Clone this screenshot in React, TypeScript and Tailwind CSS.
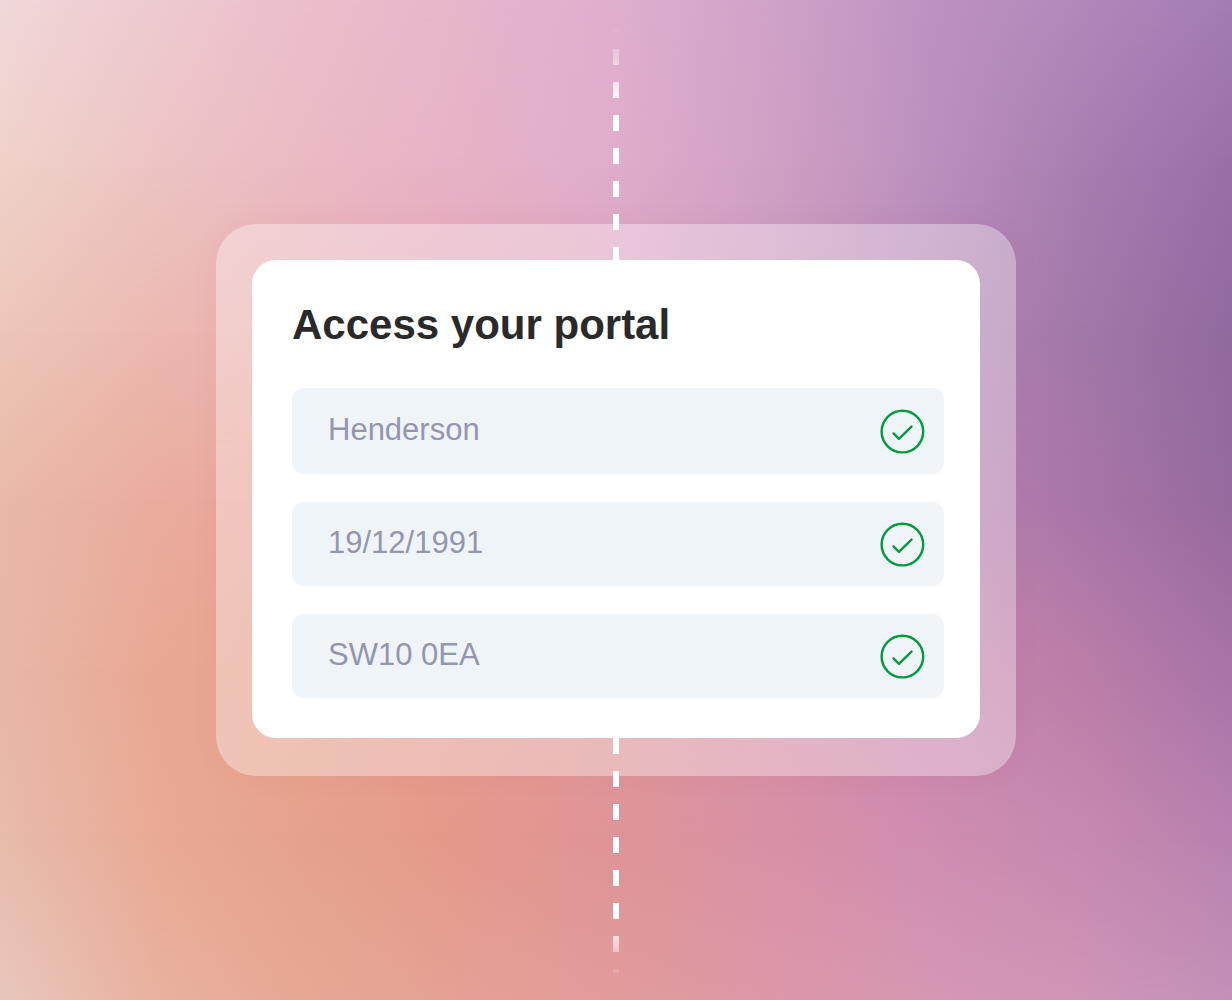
const gradientRows = [
  "bg-[linear-gradient(to_right,#f1d8d9,#eecbd0,#ecbecb,#e8b5cc,#e0afce,#d0a3ca,#bf93c1,#b189bb,#a37db4)]",
  "bg-[linear-gradient(to_right,#efd2ca,#edc4c4,#ebb9c2,#e7b2c7,#e0acca,#d0a0c5,#bc91bd,#a87eb1,#986fa8)] [mask-image:linear-gradient(to_bottom,transparent_0%,black_16.67%)]",
  "bg-[linear-gradient(to_right,#edc6b8,#ecb9b0,#eab1b4,#e6a8b8,#dda5c0,#cc9cc0,#b888b6,#a278a9,#906a9e)] [mask-image:linear-gradient(to_bottom,transparent_16.67%,black_33.33%)]",
  "bg-[linear-gradient(to_right,#e9b9a9,#eaac9e,#eaa69c,#e6a2a4,#dc9fae,#cc94b3,#bb84b0,#a976a8,#966a9e)] [mask-image:linear-gradient(to_bottom,transparent_33.33%,black_50%)]",
  "bg-[linear-gradient(to_right,#e8b7a7,#e9a895,#e8a28c,#e59b92,#df979c,#d58fa6,#c885ad,#bb7ea9,#a873a6)] [mask-image:linear-gradient(to_bottom,transparent_50%,black_66.67%)]",
  "bg-[linear-gradient(to_right,#e8bbab,#e9aa96,#e6a18d,#e4998b,#df9497,#d990a5,#d08db0,#c689b0,#b981b0)] [mask-image:linear-gradient(to_bottom,transparent_66.67%,black_83.33%)]",
  "bg-[linear-gradient(to_right,#e8c7bd,#e9b19f,#e7a795,#e5a094,#e29b9b,#dd98a8,#d697b3,#cf95b6,#c490b9)] [mask-image:linear-gradient(to_bottom,transparent_83.33%,black_100%)]",
];

const fields = [
  { id: "surname", label: "Surname", value: "Henderson", height: "h-[86px]" },
  { id: "dob", label: "Date of birth", value: "19/12/1991", height: "h-[84px]" },
  { id: "postcode", label: "Postcode", value: "SW10 0EA", height: "h-[84px]" },
];

function Backdrop() {
  return (
    <div aria-hidden="true" className="absolute inset-0 -z-10">
      {gradientRows.map((row) => (
        <div key={row} className={`absolute inset-0 ${row}`} />
      ))}
    </div>
  );
}

function ValidIcon() {
  return (
    <svg
      viewBox="0 0 44 44"
      className="size-11 shrink-0 overflow-visible"
      fill="none"
      stroke="#009b3e"
      strokeWidth="2.4"
      strokeLinecap="round"
      strokeLinejoin="round"
      aria-hidden="true"
    >
      <circle cx="22.4" cy="22.6" r="20.8" />
      <path d="M13.5 24.4 18.9 29.8 31.5 17.6" />
    </svg>
  );
}

export default function App() {
  return (
    <main className="relative isolate flex min-h-screen items-center justify-center overflow-hidden font-['Liberation_Sans',Arial,sans-serif]">
      <Backdrop />
      <div className="w-full max-w-[800px] rounded-[40px] bg-white/34 px-9 pt-9 pb-[38px] shadow-[0_0_32px_rgba(120,50,60,0.04)]">
        <form className="relative rounded-3xl bg-white pt-9 pr-9 pb-10 pl-10">
          <div
            aria-hidden="true"
            className="absolute bottom-full left-1/2 h-[244px] w-1.5 -translate-x-1/2 bg-[repeating-linear-gradient(to_bottom,white_0px,white_16px,transparent_16px,transparent_33px)] [mask-image:linear-gradient(to_bottom,transparent_10px,black_94px)]"
          />
          <div
            aria-hidden="true"
            className="absolute top-full left-1/2 h-[240px] w-1.5 -translate-x-1/2 bg-[repeating-linear-gradient(to_bottom,white_0px,white_16px,transparent_16px,transparent_33px)] [mask-image:linear-gradient(to_bottom,black_180px,transparent_240px)]"
          />
          <h1 className="mb-[34px] text-[42px] leading-[58px] font-bold text-[#2b2a2b]">Access your portal</h1>
          <div className="flex flex-col gap-7">
            {fields.map((field) => (
              <div key={field.id} className={`flex items-center rounded-xl bg-[#eff4f9] pr-5 pl-9 ${field.height}`}>
                <input
                  id={field.id}
                  type="text"
                  aria-label={field.label}
                  defaultValue={field.value}
                  className="mb-0.5 h-12 min-w-0 flex-1 bg-transparent text-[31px] leading-[48px] text-[#9396ae] outline-none"
                />
                <ValidIcon />
              </div>
            ))}
          </div>
        </form>
      </div>
    </main>
  );
}
